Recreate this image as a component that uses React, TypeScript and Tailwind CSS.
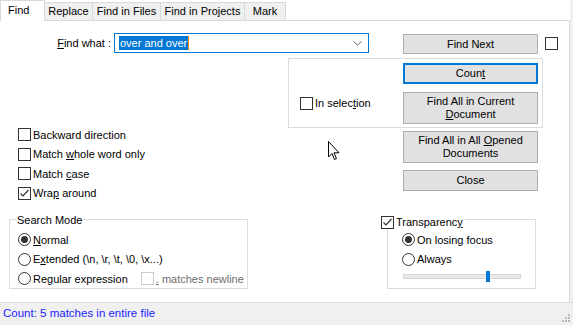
import React from 'react';

function CheckBox({ checked = false, disabled = false }: { checked?: boolean; disabled?: boolean }) {
  return (
    <span
      className={`w-[13px] h-[13px] shrink-0 border bg-white flex items-center justify-center ${
        disabled ? 'border-[#cccccc]' : 'border-[#333333]'
      }`}
    >
      {checked && (
        <svg width="11" height="11" viewBox="0 0 11 11">
          <polyline points="1.5,5.5 4,8 9.5,2" fill="none" stroke="#333333" strokeWidth="1.2" />
        </svg>
      )}
    </span>
  );
}

function Radio({ checked = false }: { checked?: boolean }) {
  return (
    <span className="w-[13px] h-[13px] shrink-0 rounded-full border border-[#333333] bg-white flex items-center justify-center">
      {checked && <span className="w-[7px] h-[7px] rounded-full bg-[#333333]" />}
    </span>
  );
}

function Btn({ children, className = '' }: { children: React.ReactNode; className?: string }) {
  return (
    <div
      className={`w-[135px] bg-[#e1e1e1] flex items-center justify-center text-center leading-[13px] ${className}`}
    >
      {children}
    </div>
  );
}

function CheckRow({ label, checked }: { label: React.ReactNode; checked?: boolean }) {
  return (
    <div className="h-[19.5px] flex items-center gap-[2px] pl-[18px]">
      <CheckBox checked={checked} />
      <span>{label}</span>
    </div>
  );
}

function RadioRow({ label, checked }: { label: React.ReactNode; checked?: boolean }) {
  return (
    <div className="h-[19.5px] flex items-center gap-[2px]">
      <Radio checked={checked} />
      <span>{label}</span>
    </div>
  );
}

const tabs = [
  { label: 'Replace', w: 'w-[48px]' },
  { label: 'Find in Files', w: 'w-[68px]' },
  { label: 'Find in Projects', w: 'w-[84px]' },
  { label: 'Mark', w: 'w-[41px]' },
];

export default function App() {
  return (
    <div className="w-[573px] h-[325px] bg-[#f0f0f0] relative overflow-hidden whitespace-nowrap text-[11px] text-black font-['Liberation_Sans',Arial,sans-serif]">
      {/* Tabs */}
      <div className="h-[20px] w-[570px] bg-white flex items-end relative">
        <div className="w-[45px] h-[21px] -mb-[1px] bg-white border border-b-0 border-[#d9d9d9] flex items-center pl-[7px] pb-[1px] z-10">
          Find
        </div>
        {tabs.map((t) => (
          <div
            key={t.label}
            className={`${t.w} h-[18px] bg-[#f0f0f0] border border-l-0 border-b-0 border-[#d9d9d9] flex items-center justify-center`}
          >
            {t.label}
          </div>
        ))}
      </div>

      {/* Panel */}
      <div className="w-[570px] h-[282px] bg-white border-t border-r border-[#d9d9d9] pt-[12px]">
        {/* Find what row */}
        <div className="flex items-start">
          <div className="w-[114px] pr-[3px] text-right leading-[20px]">
            <u>F</u>ind what :
          </div>
          <div className="w-[255px] h-[20px] border border-[#0078d7] flex items-center pl-[4px] relative">
            <span className="bg-[#0078d7] text-white leading-[14px] px-[1px]">over and over</span>
            <span className="w-[1px] h-[14px] bg-[#ff8a1a]" />
            <svg className="absolute right-[6px] top-[7px]" width="9" height="5" viewBox="0 0 9 5">
              <polyline points="0.5,0.5 4.5,4 8.5,0.5" fill="none" stroke="#606060" strokeWidth="1" />
            </svg>
          </div>
          <Btn className="ml-[34px] mt-[1px] h-[20px] border border-[#adadad]">Find Next</Btn>
          <div className="ml-[7px] mt-[4px]">
            <CheckBox />
          </div>
        </div>

        {/* Options + buttons */}
        <div className="flex mt-[4px]">
          <div className="w-[288px] pt-[67px]">
            <CheckRow label="Backward direction" />
            <CheckRow label={<>Match <u>w</u>hole word only</>} />
            <CheckRow label={<>Match <u>c</u>ase</>} />
            <CheckRow label={<>Wra<u>p</u> around</>} checked />
          </div>
          <div>
            <div className="w-[255px] h-[70px] border border-[#dcdcdc] flex">
              <div className="w-[114px] pl-[11px] pt-[36px]">
                <div className="flex items-center gap-[2px]">
                  <CheckBox />
                  <span>
                    In selec<u>t</u>ion
                  </span>
                </div>
              </div>
              <div className="pt-[4px] flex flex-col gap-[8px]">
                <Btn className="h-[21px] border-2 border-[#0078d7]">
                  <span>
                    Coun<u>t</u>
                  </span>
                </Btn>
                <Btn className="h-[32px] border border-[#adadad]">
                  <span>
                    Find All in Current
                    <br />
                    <u>D</u>ocument
                  </span>
                </Btn>
              </div>
            </div>
            <Btn className="ml-[115px] mt-[3px] h-[32px] border border-[#adadad]">
              <span>
                Find All in All <u>O</u>pened
                <br />
                Documents
              </span>
            </Btn>
            <Btn className="ml-[115px] mt-[7px] h-[21px] border border-[#adadad]">Close</Btn>
          </div>
        </div>

        {/* Bottom groups */}
        <div className="flex items-start mt-[16px]">
          <div className="ml-[9px] w-[239px] h-[70px] border border-[#dcdcdc] relative pl-[8px] pt-[10px]">
            <span className="absolute -top-[8px] left-[6px] bg-white px-[1px]">Search Mode</span>
            <RadioRow label={<><u>N</u>ormal</>} checked />
            <RadioRow label={<>E<u>x</u>tended (\n, \r, \t, \0, \x...)</>} />
            <div className="h-[19.5px] flex items-center">
              <RadioRow label={<>Re<u>g</u>ular expression</>} />
              <div className="ml-[13px] flex items-center gap-[2px] text-[#6d6d6d]">
                <CheckBox disabled />
                <span>
                  <u>.</u> matches newline
                </span>
              </div>
            </div>
          </div>

          <div className="ml-[139px] w-[149px] h-[70px] border border-[#dcdcdc] relative pl-[14px] pt-[10px]">
            <div className="absolute -top-[5px] -left-[7px] bg-white pr-[2px] flex items-center gap-[2px]">
              <CheckBox checked />
              <span className="leading-[14px]">
                Transparenc<u>y</u>
              </span>
            </div>
            <RadioRow label="On losing focus" checked />
            <RadioRow label="Always" />
            <div className="ml-[1px] mt-[5px] w-[118px] h-[5px] bg-[#e7eaea] border border-[#d6d6d6] relative">
              <div className="absolute left-[82px] -top-[4px] w-[4px] h-[11px] bg-[#0078d7]" />
            </div>
          </div>
        </div>
      </div>

      {/* Status bar */}
      <div className="h-[23px] border-t border-[#dadada] bg-[#f0f0f0] flex items-center px-[3px] text-[11.5px] text-[#1c1cff] relative">
        Count: 5 matches in entire file
        <svg className="absolute right-[2px] bottom-[2px]" width="10" height="10" viewBox="0 0 10 10">
          <rect x="7" y="1" width="2" height="2" fill="#b8b8b8" />
          <rect x="4" y="4" width="2" height="2" fill="#b8b8b8" />
          <rect x="7" y="4" width="2" height="2" fill="#b8b8b8" />
          <rect x="1" y="7" width="2" height="2" fill="#b8b8b8" />
          <rect x="4" y="7" width="2" height="2" fill="#b8b8b8" />
          <rect x="7" y="7" width="2" height="2" fill="#b8b8b8" />
        </svg>
      </div>

      {/* Mouse pointer */}
      <svg className="absolute left-[328px] top-[141px]" width="13" height="20" viewBox="0 0 13 20">
        <path
          d="M0.5 0.5 L0.5 16 L4 12.5 L6.5 18.5 L8.5 17.7 L6 11.8 L11 11.8 Z"
          fill="white"
          stroke="black"
          strokeWidth="1"
          strokeLinejoin="miter"
        />
      </svg>
    </div>
  );
}
